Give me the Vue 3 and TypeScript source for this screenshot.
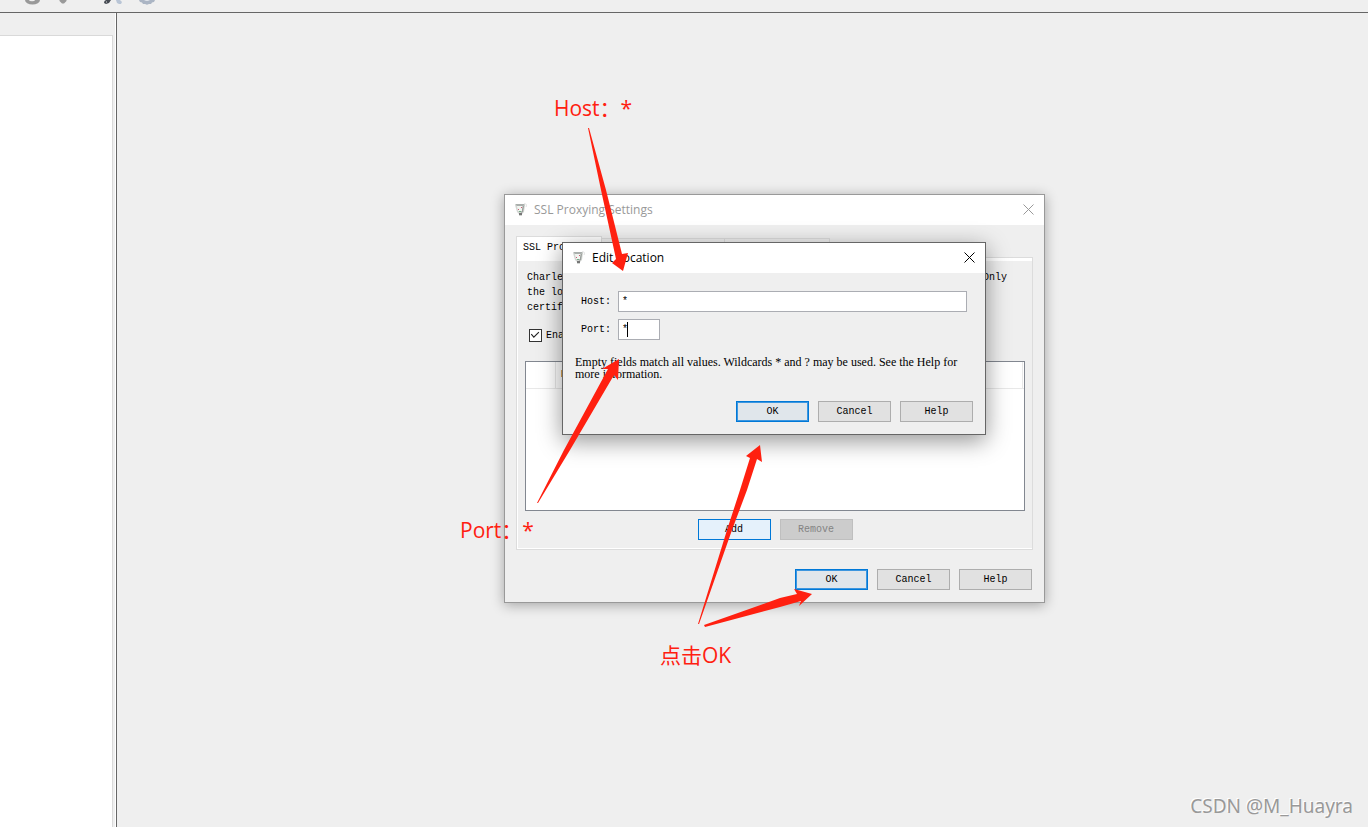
<script setup lang="ts">
import { ref } from 'vue'

const host = ref('*')
const port = ref('*')
const enabled = ref(true)
const tabs: string[] = ['SSL Proxying', 'Client Certificates', 'Root Certificate']
const activeTab = ref(0)

const arrows: string[] = [
  '588,128 589,128 606,190 622,254 628,253 623,271 612,263 616,259 601,190',
  '537,503 564,450 608,369 602,369 619,359 618,380 614,375 570,450 538,503',
  '698,624 727,530 740,490 750,458 746,456 760,445 762,462 757,459 747,490 732,530 699,624',
  '704,625 780,598 797,594 794,589 812,594 799,606 801,601 780,607 705,627',
]
</script>

<template>
  <main class="desktop">
    <header class="toolbar">
      <svg class="tools" width="180" height="12" viewBox="0 0 180 12" aria-hidden="true">
        <path d="M25 0a7.500 4.500 0 0 0 15 0h-5a3 1.200 0 0 1-6 0z" fill="#999" />
        <path d="M59.500 0h7v1l-2.500 2.500h-2l-2.500-2.500z" fill="#999" />
        <path d="M106 0h5l-2 3-3 1-2-1 .5-2z" fill="#454a52" />
        <path d="M106 2h1" stroke="#ddd" />
        <path d="M116 0h4l2 2-1 2h-2l-2-1z" fill="#b9c5d6" />
        <path d="M139 0h16l-1 2-2 .5-1 1.500h-2l-2 .8-2-.8h-2l-1-1.500-2-.5z" fill="#abb5c4" />
        <path d="M144 0h6l-2 1h-2z" fill="#dde2e9" />
      </svg>
    </header>
    <div class="workspace">
      <aside class="sidebar"><div class="list"></div></aside>
      <section class="content"></section>
    </div>

    <section class="window settings" aria-label="SSL Proxying Settings">
      <header class="titlebar">
        <svg class="jug" width="13" height="13" viewBox="0 0 13 13" aria-hidden="true">
          <path d="M10 1c2-1 3 1 2 3" fill="none" stroke="#ddd" />
          <path d="M1 2l2 7 2 2v2h3v-2l2-2 1-7z" fill="#d3d6d3" />
          <path d="M9 3h1l-1 6-2 1z" fill="#9a9f9c" />
          <path d="M1 1h9l1 1-2 1H3z" fill="#aaafac" />
          <path d="M3 3h5v5H4z" fill="#f2f5f1" />
          <path d="M4 6h1v1H4zM7 4h1v1H7z" fill="#ce5d76" />
          <path d="M5 8h2v1H5z" fill="#74ae86" />
          <path d="M5 10h3v2H5z" fill="#777" />
        </svg>
        <h1>SSL Proxying Settings</h1>
        <button class="close" type="button" aria-label="Close settings">
          <svg width="11" height="11" viewBox="0 0 11 11"><path d="M.5.5l10 10M10.500.5l-10 10" /></svg>
        </button>
      </header>
      <div class="body">
        <nav class="tabs">
          <button v-for="(tab, i) in tabs" :key="tab" type="button" :class="{ active: i === activeTab }" @click="activeTab = i">{{ tab }}</button>
        </nav>
        <div class="panel">
          <p>Charles can show you the plain text contents of SSL requests and responses. Only the locations listed below will be proxied. Charles will issue and sign SSL certificates, please press the Help button for more information.</p>
          <label class="enable">
            <input v-model="enabled" type="checkbox" />
            <svg width="13" height="13" viewBox="0 0 13 13" aria-hidden="true"><path v-if="enabled" d="M1.500 5l3 3.500 6-6" /></svg>
            <span>Enable SSL Proxying</span>
          </label>
          <div class="tablebox">
            <table>
              <thead><tr><th class="tick"></th><th>Location</th><th class="end"></th></tr></thead>
            </table>
          </div>
          <div class="row center">
            <button class="btn hover" type="button">Add</button>
            <button class="btn" type="button" disabled>Remove</button>
          </div>
        </div>
        <div class="row">
          <button class="btn primary" type="button">OK</button>
          <button class="btn" type="button">Cancel</button>
          <button class="btn" type="button">Help</button>
        </div>
      </div>
    </section>

    <section class="window edit" role="dialog" aria-label="Edit Location">
      <header class="titlebar">
        <svg class="jug" width="13" height="13" viewBox="0 0 13 13" aria-hidden="true">
          <path d="M10 1c2-1 3 1 2 3" fill="none" stroke="#ddd" />
          <path d="M1 2l2 7 2 2v2h3v-2l2-2 1-7z" fill="#d3d6d3" />
          <path d="M9 3h1l-1 6-2 1z" fill="#9a9f9c" />
          <path d="M1 1h9l1 1-2 1H3z" fill="#aaafac" />
          <path d="M3 3h5v5H4z" fill="#f2f5f1" />
          <path d="M4 6h1v1H4zM7 4h1v1H7z" fill="#ce5d76" />
          <path d="M5 8h2v1H5z" fill="#74ae86" />
          <path d="M5 10h3v2H5z" fill="#777" />
        </svg>
        <h1>Edit Location</h1>
        <button class="close" type="button" aria-label="Close">
          <svg width="11" height="11" viewBox="0 0 11 11"><path d="M.5.5l10 10M10.500.5l-10 10" /></svg>
        </button>
      </header>
      <form class="form" @submit.prevent>
        <div class="fields">
          <label for="host">Host:</label>
          <input id="host" v-model="host" type="text" />
          <label for="port">Port:</label>
          <div class="portbox"><input id="port" v-model="port" type="text" /><i class="caret"></i></div>
        </div>
        <p class="hint">Empty fields match all values. Wildcards * and ? may be used. See the Help for more information.</p>
        <div class="row">
          <button class="btn primary" type="submit">OK</button>
          <button class="btn" type="button">Cancel</button>
          <button class="btn" type="button">Help</button>
        </div>
      </form>
    </section>

    <svg class="arrows" width="1368" height="827" viewBox="0 0 1368 827" aria-hidden="true">
      <polygon v-for="points in arrows" :key="points" :points="points" />
    </svg>
    <span class="note host">Host：*</span>
    <span class="note port">Port：*</span>
    <span class="note click">点击OK</span>
    <span class="watermark">CSDN @M_Huayra</span>
  </main>
</template>

<style>
body { margin: 0; }
</style>

<style scoped>
* { box-sizing: border-box; }
.desktop {
  position: relative;
  display: flex;
  flex-direction: column;
  min-height: 100vh;
  overflow: hidden;
  background: #efefef;
  color: #000;
  font: 10px/15px "Liberation Mono", monospace;
}
button, input { font: inherit; color: inherit; }
h1, p { margin: 0; }
.toolbar { height: 13px; border-bottom: 1px solid #666; }
.tools { display: block; }
.workspace { display: flex; flex: 1; }
.sidebar {
  display: flex;
  width: 117px;
  padding: 22px 3px 0 0;
  border-right: 1px solid #666;
  box-shadow: inset -1px 0 #fff;
}
.list { flex: 1; background: #fff; border: solid #d9d9d9; border-width: 1px 1px 0 0; }
.content { flex: 1; }

.window { position: absolute; background: #efefef; border: 1px solid #999; }
.settings { left: 504px; top: 194px; width: 541px; box-shadow: 0 2px 12px rgba(0, 0, 0, .32); }
.edit { left: 562px; top: 242px; width: 424px; border-color: #666; box-shadow: 0 6px 22px rgba(0, 0, 0, .42); }
.titlebar { display: flex; align-items: center; height: 30px; padding: 0 10px 1px 9px; gap: 7px; background: #fff; }
.titlebar h1 { flex: 1; font: 12px/18px "Open Sans", "Noto Sans", sans-serif; }
.settings .titlebar { color: #999; }
.close { display: flex; padding: 0; border: 0; background: none; }
.close path { fill: none; stroke: currentColor; }
.body { padding: 11px; }
.tabs { display: flex; align-items: flex-start; height: 21px; padding-top: 2px; }
.tabs button {
  height: 19px;
  padding: 0 4px;
  border: 1px solid #dcdcdc;
  border-left: 0;
  background: #efefef;
  white-space: nowrap;
}
.tabs .active { position: relative; height: 25px; margin-top: -2px; padding: 0 6px 4px; border-left: 1px solid #dcdcdc; border-bottom: 0; background: #fff; }
.panel {
  padding: 12px 7px 9px 8px;
  border: 1px solid #dcdcdc;
  box-shadow: inset 1px -1px #fff, inset 0 3px #fff;
}
.panel p { padding: 0 2px; }
.enable { position: relative; display: flex; align-items: center; height: 15px; margin: 13px 4px 18px; gap: 4px; }
.enable input { position: absolute; margin: 0; width: 13px; height: 13px; opacity: 0; }
.enable svg { background: #fff; border: 1px solid #333; }
.enable path { fill: none; stroke: #222; stroke-width: 1.3; }
.tablebox { height: 150px; border: 1px solid #828790; background: #fff; }
table { width: 100%; border-collapse: collapse; table-layout: fixed; }
th { height: 26px; padding: 0 5px; border: solid #e8e8e8; border-width: 0 1px 1px 0; text-align: left; font-weight: 400; }
th.tick { width: 29px; }
th.end { width: 2px; padding: 0; border-right: 0; }
.row { display: flex; justify-content: flex-end; gap: 9px; }
.row.center { justify-content: center; margin-top: 8px; }
.body > .row { margin: 19px 1px 1px; }
.btn { width: 73px; height: 21px; padding: 0; border: 1px solid #adadad; background: #e1e1e1; text-align: center; }
.btn.primary { border-color: #0078d7; background: #e0e6eb; box-shadow: inset 0 0 0 1px #3c96df; }
.btn.hover { border-color: #0078d7; background: #e5f1fb; }
.btn:disabled { border-color: #bfbfbf; background: #ccc; color: #838383; }

.form { padding: 18px 12px 12px; }
.fields { display: grid; grid-template-columns: 32px 1fr; gap: 7px 5px; align-items: center; padding: 0 6px; }
.fields input { width: 100%; height: 21px; padding: 0 3px; border: 1px solid #abadb3; border-radius: 0; background: #fff; outline: 0; }
.portbox { position: relative; width: 42px; }
.portbox input { display: block; }
.caret { position: absolute; left: 9px; top: 3px; width: 1px; height: 15px; background: #000; }
.hint { margin: 16px 0 21px; font: 12px/12px "Liberation Serif", serif; }

.arrows { position: absolute; left: 0; top: 0; pointer-events: none; fill: #ff2010; }
.note { position: absolute; color: #ff2010; font: 21px/30px "Open Sans", "Noto Sans CJK SC", sans-serif; white-space: nowrap; }
.note.host { left: 554px; top: 93px; }
.note.port { left: 460px; top: 515px; }
.note.click { left: 660px; top: 640px; }
.watermark { position: absolute; right: 15px; bottom: 7px; color: #999; font: 19px/28px "Noto Sans", sans-serif; text-shadow: -1px -1px #fff; }
</style>
